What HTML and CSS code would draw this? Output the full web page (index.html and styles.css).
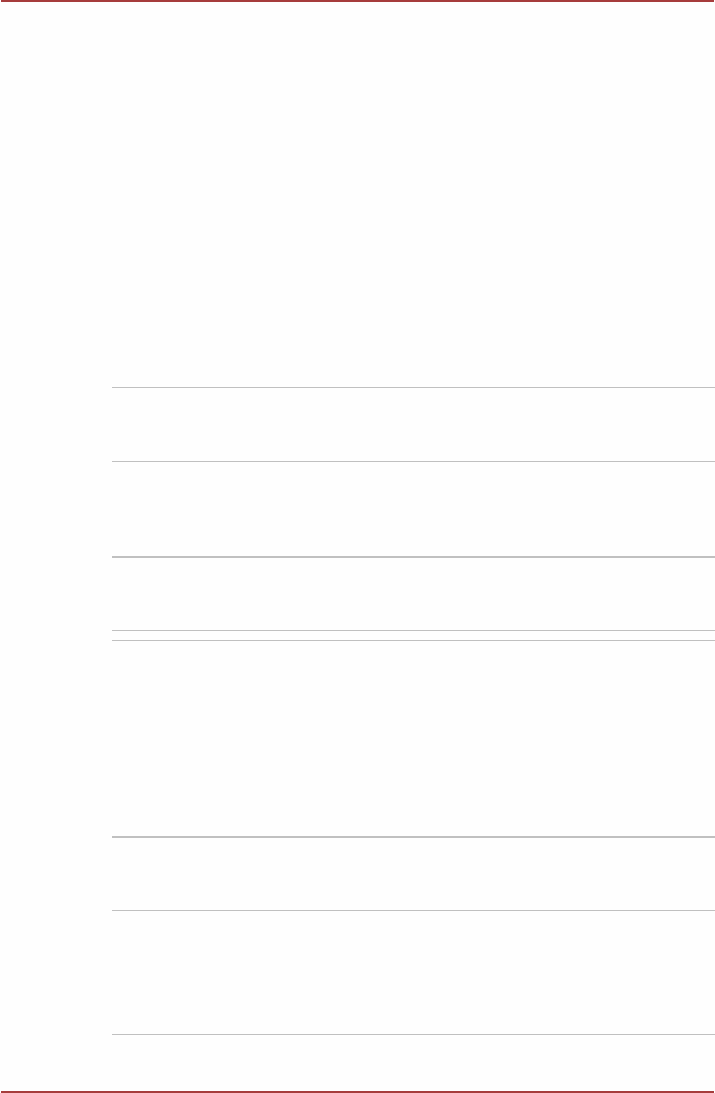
FILE: index.html
```html
<!DOCTYPE html>
<html lang="en">
<head>
    <meta charset="UTF-8">
    <meta name="viewport" content="width=device-width, initial-scale=1.0">
    <title>Page</title>
    <link rel="stylesheet" href="styles.css">
</head>
<body>
    <div class="page">
        <div class="rule-top"></div>
        <div class="content">
            <div class="table">
                <div class="row r1"></div>
                <div class="row r2"></div>
                <div class="row thick r3"></div>
                <div class="row r4"></div>
                <div class="row r5"></div>
                <div class="row thick r6"></div>
                <div class="row r7"></div>
            </div>
        </div>
        <div class="rule-bottom"></div>
    </div>
</body>
</html>
```

FILE: styles.css
```css
body {
    margin: 0;
    font-family: "Liberation Sans", Arial, sans-serif;
    background-color: #fefefe;
}
.page {
    display: flex;
    flex-direction: column;
    height: 1093px;
}
.rule-top,
.rule-bottom {
    height: 2px;
    margin: 0 1px;
    background-color: #a63c3c;
}
.content {
    flex: 1;
    padding-top: 385px;
}
.table {
    margin-left: 112px;
    border-bottom: 1px solid #c0c0c0;
}
.row {
    border-top: 1px solid #c0c0c0;
}
.row.thick {
    border-top-width: 2px;
}
.r1 { height: 73px; }
.r2 { height: 94px; }
.r3 { height: 72px; }
.r4 { height: 9px; }
.r5 { height: 195px; }
.r6 { height: 72px; }
.r7 { height: 123px; }
```
